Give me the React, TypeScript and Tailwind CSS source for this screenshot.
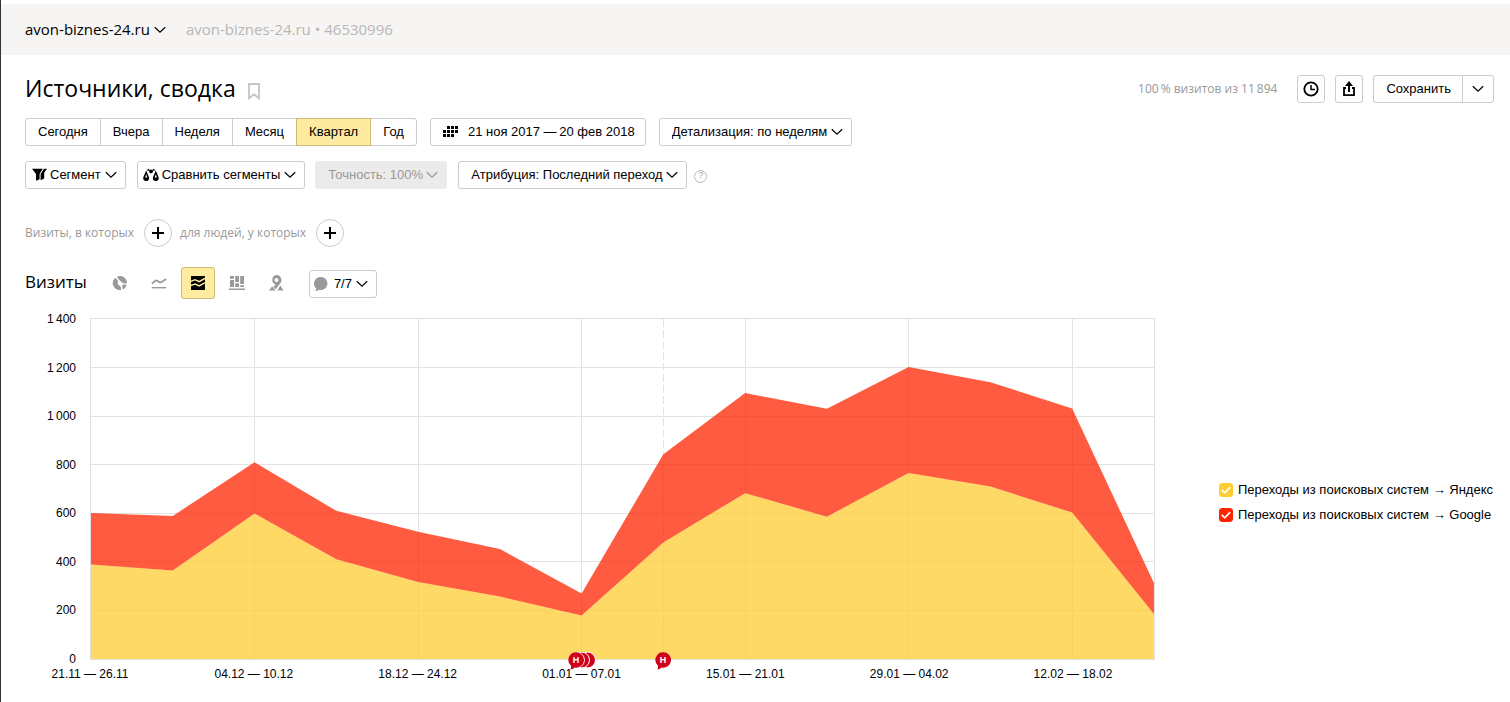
import { useState, type ReactNode } from 'react';

const UI = "font-['Liberation_Sans',Arial,sans-serif]";
const HUMANIST = "font-['Open_Sans','Noto_Sans',sans-serif]";

const periods = ['Сегодня', 'Вчера', 'Неделя', 'Месяц', 'Квартал', 'Год'];
const yTicks = ['1\u2009400', '1\u2009200', '1\u2009000', '800', '600', '400', '200', '0'];
const xTicks = [
  '21.11 — 26.11',
  '04.12 — 10.12',
  '18.12 — 24.12',
  '01.01 — 07.01',
  '15.01 — 21.01',
  '29.01 — 04.02',
  '12.02 — 18.02',
];

const MAX = 1400;
const STEPS = 13;
const yandex = [389, 364, 599, 411, 317, 257, 179, 480, 683, 586, 766, 710, 603, 185];
const total = [601, 589, 810, 610, 524, 453, 270, 843, 1095, 1030, 1202, 1140, 1031, 313];

const px = (i: number) => (i / STEPS) * 1300;
const py = (v: number) => 340 - (v / MAX) * 340;
const line = (vals: number[]) => vals.map((v, i) => `${px(i)},${py(v)}`);
const area = (top: number[], bottom: number[]) => [...line(top), ...line(bottom).reverse()].join(' ');

function Chevron({ className = '' }: { className?: string }) {
  return (
    <svg aria-hidden="true" width="12" height="8" viewBox="0 0 12 8" className={`shrink-0 ${className}`}>
      <path d="M.8 1.2 6 6.2 11.2 1.2" fill="none" stroke="currentColor" strokeWidth="1.2" />
    </svg>
  );
}

function Btn({ children, className = '', label }: { children: ReactNode; className?: string; label?: string }) {
  return (
    <button
      type="button"
      aria-label={label}
      className={`flex h-7 items-center justify-center rounded-[3px] border border-[#ccc] bg-white hover:border-[#999] ${className}`}
    >
      {children}
    </button>
  );
}

function Dropdown({ label, value, disabled = false }: { label: string; value: string; disabled?: boolean }) {
  return (
    <div className={`relative ${disabled ? 'text-[#999]' : 'text-black'}`}>
      <select
        aria-label={label}
        disabled={disabled}
        className={`block h-7 appearance-none rounded-[3px] border pr-[23px] pl-3 ${
          disabled ? 'border-[#ebebeb] bg-[#ebebeb] opacity-100' : 'border-[#ccc] bg-white'
        }`}
      >
        <option>{`${label}: ${value}`}</option>
      </select>
      <Chevron className="pointer-events-none absolute top-[10px] right-[9px]" />
    </div>
  );
}

function FilterIcon() {
  return (
    <svg aria-hidden="true" width="15" height="14" viewBox="0 0 15 14" className="shrink-0">
      <path d="M0 .8h10.8L7.6 5.8v5.4L4 12.8V6z" />
      <path d="M12 .8h3L12.2 4.8v5.6L8.6 12.3V6z" />
    </svg>
  );
}

function ScalesIcon() {
  return (
    <svg aria-hidden="true" width="16" height="14" viewBox="0 0 16 14" className="shrink-0">
      <path
        fillRule="evenodd"
        d="M3.2 2.4 5.9 9c.6 2.400-.6 4-2.800 4S-.2 11.400.4 9zM3.2 6.200 2.100 9.400h2.200z"
      />
      <path
        fillRule="evenodd"
        d="M12.8 2.4 15.500 9c.6 2.400-.6 4-2.800 4s-3.300-1.600-2.700-4zM12.8 6.200 11.700 9.400h2.200z"
      />
      <circle cx="8" cy="3.400" r="1.900" />
      <path d="M3.400 2.600 5.600.8 7.200 2.800zM12.600 2.600 10.400.8 8.800 2.800z" />
    </svg>
  );
}

function CalendarIcon() {
  const dots: [number, number][] = [];
  [[1, 2, 3], [0, 1, 2, 3], [0, 1, 2]].forEach((cols, r) => cols.forEach((c) => dots.push([c, r])));
  return (
    <svg aria-hidden="true" width="16" height="12" viewBox="0 0 16 12" className="shrink-0">
      {dots.map(([c, r]) => (
        <rect key={`${c}-${r}`} x={c * 4} y={r * 4} width="3" height="3" />
      ))}
    </svg>
  );
}

function ViewIcon({ kind }: { kind: string }) {
  const common = { 'aria-hidden': true, width: 16, height: 16, viewBox: '0 0 16 16', fill: 'currentColor' } as const;
  if (kind === 'pie')
    return (
      <svg {...common}>
        <path d="M3.3 2.7 6.3 6.2A3 3 0 0 0 8.6 11l.6 3.9A7 7 0 0 1 3.3 2.7z" />
        <path d="M4.8 1.7A7 7 0 0 1 14.9 8.4L11 8.2 7.2 5z" />
        <path d="m10.2 10.7 1-1.3 3.6.4a7 7 0 0 1-4.2 4.7z" />
      </svg>
    );
  if (kind === 'lines')
    return (
      <svg {...common}>
        <path d="M.8 8.6 4.4 5.8q1-.6 2 0l1.6 1.2q1.2.8 2.6 0L15.2 4" fill="none" stroke="currentColor" strokeWidth="1.8" />
        <path d="M.8 12h14.4v1.4H.8z" />
      </svg>
    );
  if (kind === 'areas')
    return (
      <svg {...common}>
        <path d="M1 1h14v1.6L9.2 5.8 5 3.9 1 5.4z" />
        <path d="M1 7 5 5.5l4.2 2L15 4.3v2.600L9.2 10.100 5 8.200 1 9.700z" />
        <path d="M1 11.300 5 9.800l4.200 2L15 8.600V15H1z" />
      </svg>
    );
  if (kind === 'bars')
    return (
      <svg {...common}>
        <path d="M1 1h4v2.8H1zM1 5h4v7H1zM6.2 1H10v6H6.2zM6.2 8.2H10V12H6.2zM11.2 1H15v8h-3.8zM11.2 10.2H15V12h-3.8zM0 13.4h16V15H0z" />
      </svg>
    );
  return (
    <svg {...common}>
      <path
        fillRule="evenodd"
        d="M8.500 0a4.900 4.900 0 0 1 4.900 4.900c0 4-3.400 5-5.200 9.300L5.400 12c1-1.400 1.700-2 2-2.600A4.900 4.900 0 0 1 8.500 0m0 2.900a2 2 0 1 0 0 4 2 2 0 0 0 0-4"
      />
      <path d="m1 15.600 3.200-4.400 3.600 4.400zM9.400 15.600l3-5 3 5z" />
    </svg>
  );
}

const views = [
  { kind: 'pie', label: 'Круговая диаграмма' },
  { kind: 'lines', label: 'Линии' },
  { kind: 'areas', label: 'Области' },
  { kind: 'bars', label: 'Колонки' },
  { kind: 'map', label: 'Карта' },
];

function Header() {
  return (
    <header className={`mt-1 flex h-[51px] items-center gap-5 bg-[#f6f5f3] pl-6 text-[15px] ${HUMANIST}`}>
      <button type="button" className="flex items-center gap-1">
        avon-biznes-24.ru
        <Chevron />
      </button>
      <span className="text-[#b8b7b6]">avon-biznes-24.ru • 46530996</span>
    </header>
  );
}

function TitleRow() {
  return (
    <div className="flex items-center">
      <h1 className={`pb-[2px] text-[23px] leading-[26px] ${HUMANIST}`}>Источники, сводка</h1>
      <button type="button" aria-label="В избранное" className="ml-3 pt-1">
        <svg aria-hidden="true" width="12" height="17" viewBox="0 0 12 17">
          <path d="M1 1h10v14.4L6 11.2 1 15.4z" fill="none" stroke="#c4c4c4" strokeWidth="1.8" />
        </svg>
      </button>
      <div className={`mr-5 ml-auto text-[12px] text-[#999] ${HUMANIST}`}>{'100\u2009% визитов из 11\u2009894'}</div>
      <div className="flex gap-[10px]">
        <Btn label="История" className="w-7">
          <svg aria-hidden="true" width="16" height="16" viewBox="0 0 16 16" fill="none" stroke="#000">
            <circle cx="8" cy="8" r="6.7" strokeWidth="1.8" />
            <path d="M8 4v4.4h4" strokeWidth="1.5" />
          </svg>
        </Btn>
        <Btn label="Экспорт" className="w-7">
          <svg aria-hidden="true" width="14" height="16" viewBox="0 0 14 16">
            <path d="M4 7H2v7.2h10V7h-2" fill="none" stroke="#000" strokeWidth="1.8" />
            <path d="M7 0l4 5H8v6H6V5H3z" />
          </svg>
        </Btn>
        <div className="flex">
          <Btn className="rounded-r-none pr-[11px] pl-3">Сохранить</Btn>
          <Btn label="Другие варианты" className="-ml-px w-8 rounded-l-none">
            <Chevron />
          </Btn>
        </div>
      </div>
    </div>
  );
}

function Filters() {
  const [period, setPeriod] = useState('Квартал');
  return (
    <>
      <div className="mt-[15px] flex flex-wrap items-center">
        <div className="flex" role="group" aria-label="Период">
          {periods.map((p) => (
            <button
              key={p}
              type="button"
              aria-pressed={p === period}
              onClick={() => setPeriod(p)}
              className={`-ml-px h-7 border px-3 first:ml-0 first:rounded-l-[3px] last:rounded-r-[3px] ${
                p === period ? 'relative border-[#ccba76] bg-[#ffeba0]' : 'border-[#ccc] bg-white'
              }`}
            >
              {p}
            </button>
          ))}
        </div>
        <Btn className="ml-[13px] gap-[9px] pr-[10px] pl-3">
          <CalendarIcon />
          <span>{'21 ноя 2017 —\u200920 фев 2018'}</span>
        </Btn>
        <div className="ml-[13px]">
          <Dropdown label="Детализация" value="по неделям" />
        </div>
      </div>
      <div className="mt-[15px] flex flex-wrap items-center">
        <Btn className="gap-[3px] pr-2 pl-[6px]">
          <FilterIcon />
          <span className="flex items-center gap-1">
            Сегмент
            <Chevron />
          </span>
        </Btn>
        <Btn className="ml-[11px] gap-[3px] pr-2 pl-[5px]">
          <ScalesIcon />
          <span className="flex items-center gap-1">
            Сравнить сегменты
            <Chevron />
          </span>
        </Btn>
        <div className="ml-[10px]">
          <Dropdown label="Точность" value="100%" disabled />
        </div>
        <div className="ml-[11px]">
          <Dropdown label="Атрибуция" value="Последний переход" />
        </div>
        <button
          type="button"
          aria-label="Справка"
          className="mt-[2px] ml-[7px] flex size-[13px] items-center justify-center rounded-full border border-[#bbb] text-[9px] text-[#aaa]"
        >
          ?
        </button>
      </div>
    </>
  );
}

function PlusButton({ label }: { label: string }) {
  return (
    <button
      type="button"
      aria-label={label}
      className="flex size-7 items-center justify-center rounded-full border border-[#ccc] bg-white"
    >
      <svg aria-hidden="true" width="12" height="12" viewBox="0 0 12 12">
        <path d="M5 0h2v5h5v2H7v5H5V7H0V5h5z" />
      </svg>
    </button>
  );
}

function Conditions() {
  return (
    <div className={`mt-[30px] flex items-center text-[12px] text-[#999] ${HUMANIST}`}>
      <span className="mr-[10px]">Визиты, в которых</span>
      <PlusButton label="Добавить условие визитов" />
      <span className="mr-[10px] ml-2">для людей, у которых</span>
      <PlusButton label="Добавить условие для людей" />
    </div>
  );
}

function Toolbar() {
  const [view, setView] = useState('areas');
  return (
    <div className="mt-5 flex items-center">
      <h2 className={`mr-4 pb-[3px] text-[17px] leading-6 ${HUMANIST}`}>Визиты</h2>
      <div className="flex gap-[5px]">
        {views.map(({ kind, label }) => (
          <button
            key={kind}
            type="button"
            aria-label={label}
            aria-pressed={kind === view}
            onClick={() => setView(kind)}
            className={`flex h-8 w-[34px] items-center justify-center rounded-[3px] border ${
              kind === view ? 'border-[#ccba76] bg-[#ffeba0] text-black' : 'border-transparent text-[#999]'
            }`}
          >
            <ViewIcon kind={kind} />
          </button>
        ))}
      </div>
      <Btn className="mt-px ml-4 gap-[6px] pr-2 pl-1">
        <svg aria-hidden="true" width="14" height="16" viewBox="0 0 14 16" fill="#999">
          <path d="M7 1a6.5 6.5 0 1 1-2 12.7C3.9 14.7 2.5 15 1.2 15c.8-.7 1-1.6 1-2.7A6.5 6.5 0 0 1 7 1" />
        </svg>
        <span className="flex items-center gap-1">
          7/7
          <Chevron />
        </span>
      </Btn>
    </div>
  );
}

function Note({ extra = 0 }: { extra?: number }) {
  return (
    <svg aria-hidden="true" width={16 + extra * 6} height="18" viewBox={`0 0 ${16 + extra * 6} 18`}>
      {Array.from({ length: extra }, (_, k) => extra - k).map((k) => (
        <circle key={k} cx={7.6 + k * 6} cy="8" r="7.9" fill="#d0021b" stroke="#fff" strokeWidth="1" />
      ))}
      {extra > 0 && <circle cx="9" cy="8" r="7.900" fill="#fff" />}
      <path d="M8 .2a7.8 7.8 0 1 1-1.5 15.400C5.500 16.800 4 17.500 2.200 17.500c.8-1 1-2 .8-3.700A7.800 7.800 0 0 1 8 .2" fill="#d0021b" />
      <text x="8" y="11" textAnchor="middle" fill="#fff" fontSize="9" fontWeight="700" fontFamily="Liberation Sans, sans-serif">
        Н
      </text>
    </svg>
  );
}

function Chart({ showYandex, showGoogle }: { showYandex: boolean; showGoogle: boolean }) {
  const zero = total.map(() => 0);
  const base = showYandex ? yandex : zero;
  const top = total.map((t, i) => t - yandex[i] + base[i]);
  return (
    <div className="flex min-w-0 flex-1 gap-[14px] text-[12px] leading-4">
      <div className="mt-px flex h-[356px] w-[51px] shrink-0 flex-col justify-between text-right">
        {yTicks.map((t) => (
          <span key={t}>{t}</span>
        ))}
      </div>
      <div className="min-w-0 flex-1 pt-2">
        <div className="relative h-[342px] border border-[#e0e0e0]">
          <svg role="img" aria-label="График визитов по неделям" className="block h-full w-full" viewBox="0 0 1300 340" preserveAspectRatio="none">
            <g stroke="#e3e3e3" strokeWidth="1">
              {[200, 400, 600, 800, 1000, 1200].map((v) => (
                <line key={v} x1="0" x2="1300" y1={py(v)} y2={py(v)} vectorEffect="non-scaling-stroke" shapeRendering="crispEdges" />
              ))}
              {[2, 4, 6, 8, 10, 12].map((i) => (
                <line key={i} x1={px(i)} x2={px(i)} y1="0" y2="340" vectorEffect="non-scaling-stroke" shapeRendering="crispEdges" />
              ))}
              <line x1={px(7)} x2={px(7)} y1="0" y2="340" strokeDasharray="8 3" vectorEffect="non-scaling-stroke" shapeRendering="crispEdges" />
            </g>
            {showYandex && <polygon points={area(yandex, zero)} fill="#fc3" fillOpacity=".75" />}
            {showGoogle && <polygon points={area(top, base)} fill="#ff2400" fillOpacity=".75" />}
          </svg>
          <div className="absolute -bottom-[11px] left-[46.154%] -ml-[14px]">
            <Note extra={2} />
          </div>
          <div className="absolute -bottom-[11px] left-[53.846%] -ml-2">
            <Note />
          </div>
        </div>
        <div className="mt-[6px] -ml-[7.692%] flex">
          {xTicks.map((t) => (
            <span key={t} className="flex-1 text-center whitespace-nowrap">
              {t}
            </span>
          ))}
        </div>
      </div>
    </div>
  );
}

function LegendItem({ text, color, checked, onChange }: { text: string; color: string; checked: boolean; onChange: () => void }) {
  return (
    <label className="flex items-center gap-[5px] whitespace-nowrap">
      <span className="relative block size-[14px]">
        <input type="checkbox" checked={checked} onChange={onChange} className={`block size-[14px] appearance-none rounded-[3px] border ${color}`} />
        {checked && (
          <svg aria-hidden="true" className="pointer-events-none absolute inset-0" width="14" height="14" viewBox="0 0 14 14">
            <path d="m2.8 6.8 3 3 5.4-5.6" fill="none" stroke="#fff" strokeWidth="1.7" />
          </svg>
        )}
      </span>
      {text}
    </label>
  );
}

export default function App() {
  const [showYandex, setShowYandex] = useState(true);
  const [showGoogle, setShowGoogle] = useState(true);
  return (
    <div className={`min-h-screen overflow-x-hidden border-l border-[#333] bg-white text-[13px] text-black ${UI}`}>
      <Header />
      <main className="pt-5 pr-4 pl-6">
        <TitleRow />
        <Filters />
        <Conditions />
        <Toolbar />
        <section className="mt-[11px] flex items-center gap-16">
          <Chart showYandex={showYandex} showGoogle={showGoogle} />
          <div className="flex shrink-0 flex-col gap-[9px] pt-3 pr-px leading-4">
            <LegendItem
              text="Переходы из поисковых систем → Яндекс"
              color="border-[#fc3] checked:bg-[#fc3]"
              checked={showYandex}
              onChange={() => setShowYandex(!showYandex)}
            />
            <LegendItem
              text="Переходы из поисковых систем → Google"
              color="border-[#ff2400] checked:bg-[#ff2400]"
              checked={showGoogle}
              onChange={() => setShowGoogle(!showGoogle)}
            />
          </div>
        </section>
      </main>
    </div>
  );
}
